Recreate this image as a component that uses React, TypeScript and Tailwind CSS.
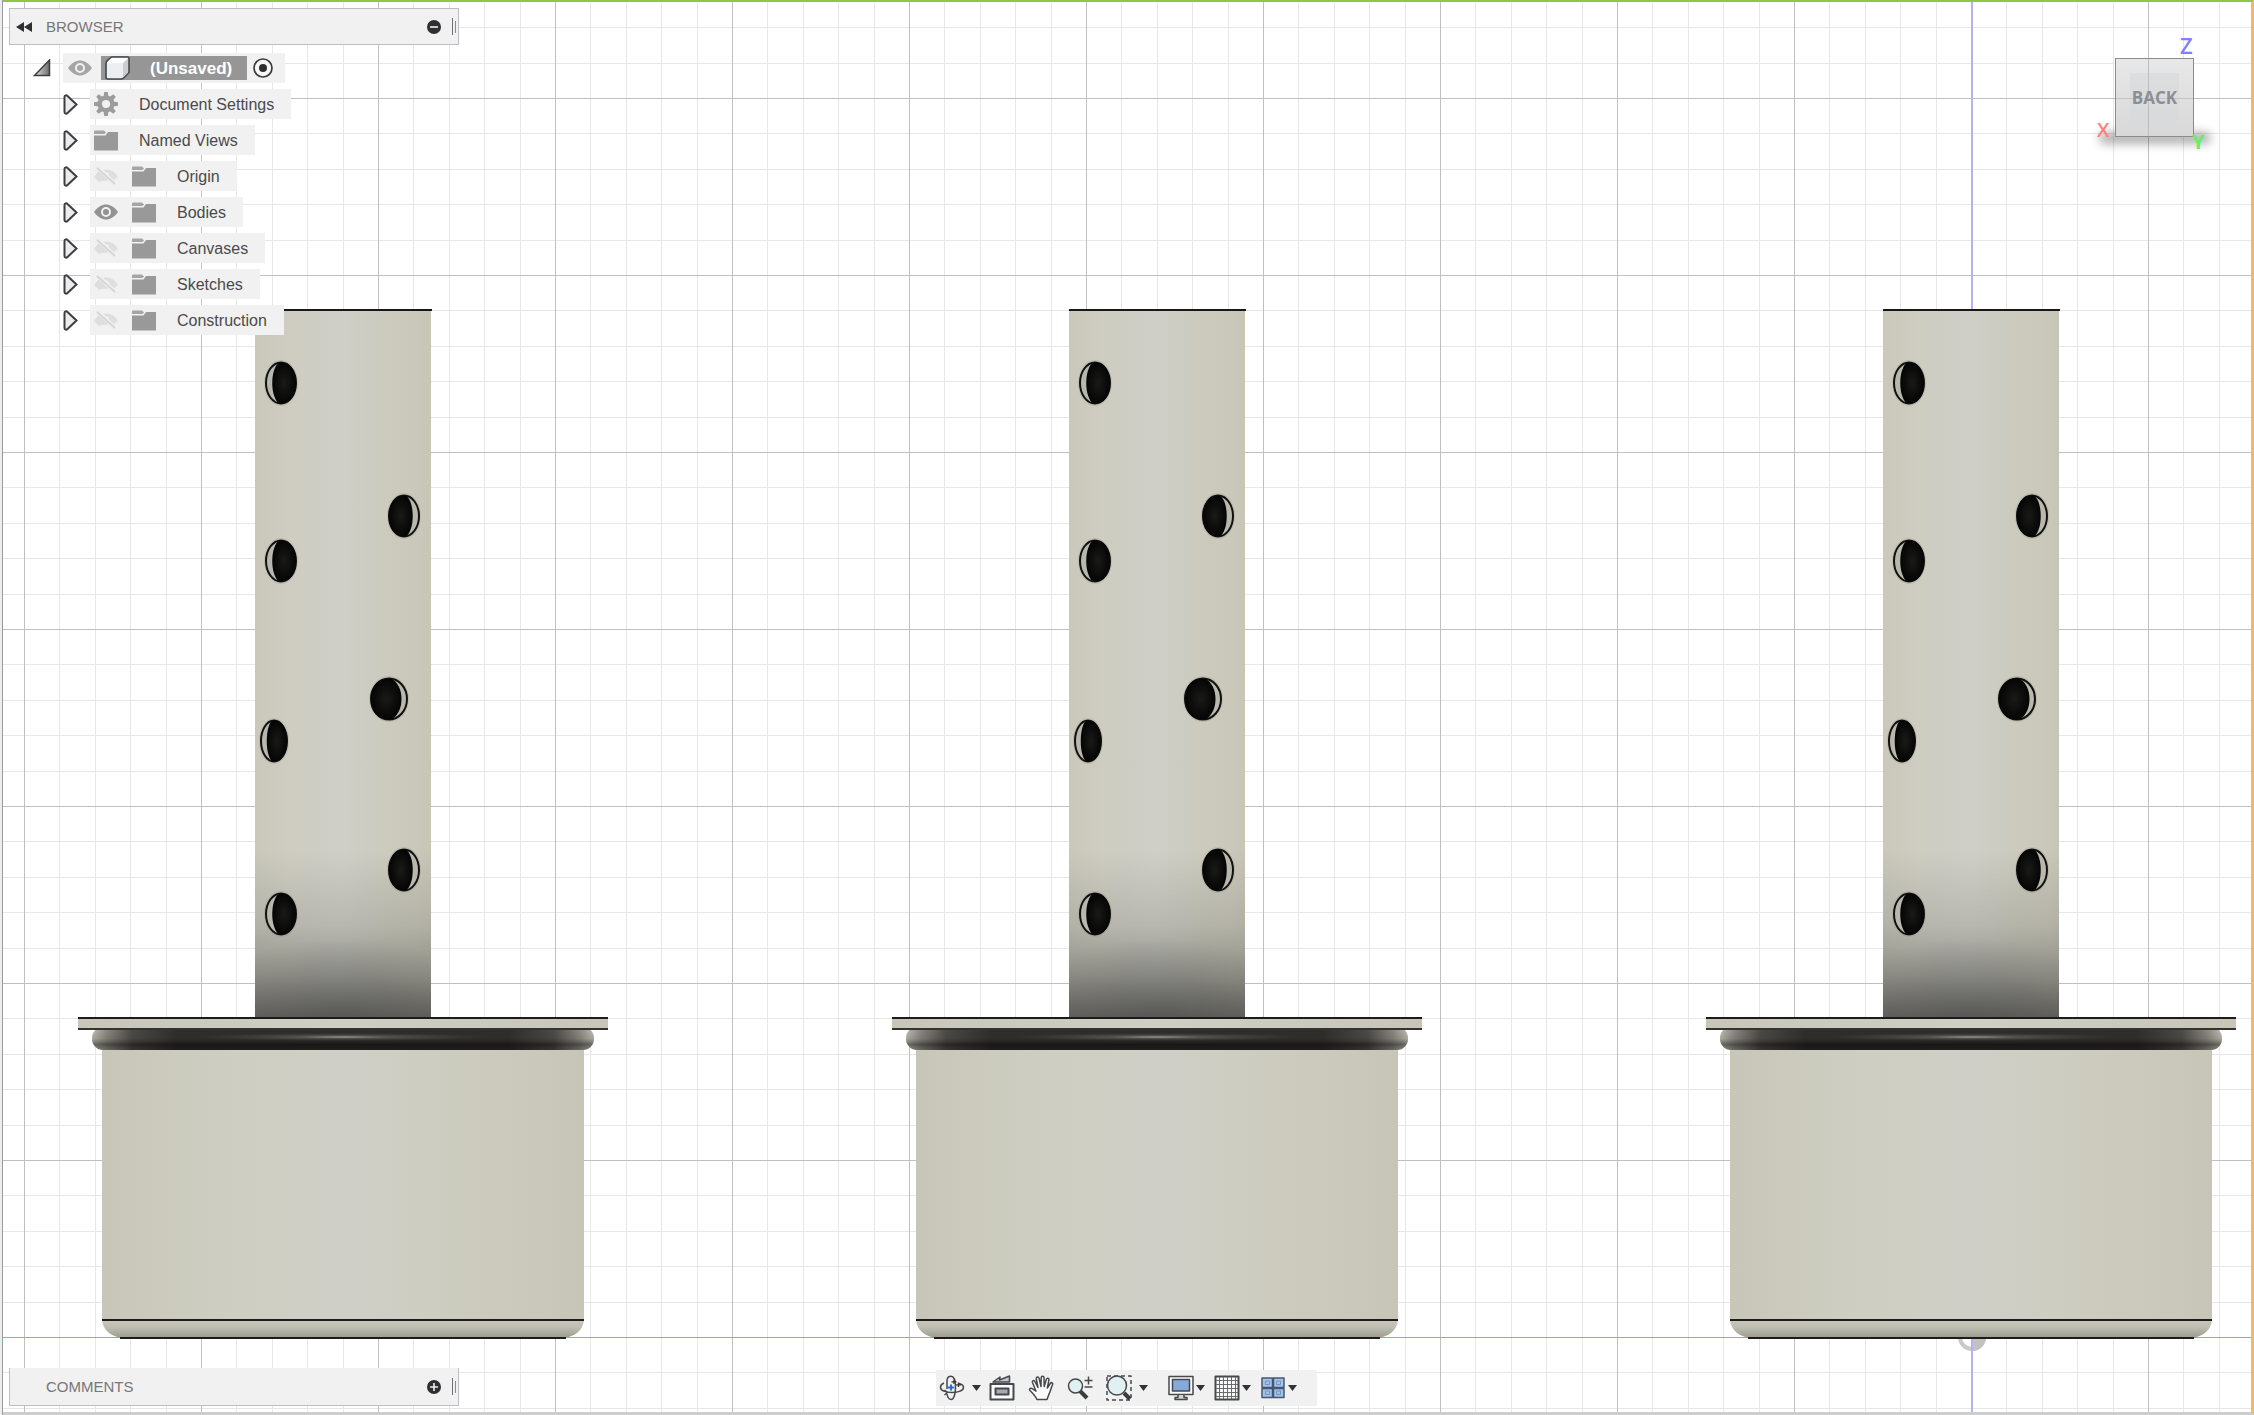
import React from "react";

const CENTERS = [343, 1157, 1971];

type HoleSpec = { x: number; y: number; rx: number; side: "left" | "right"; rim: number };

// Offsets are measured from the axis of the tube.
const HOLES: HoleSpec[] = [
  { x: -62, y: 383, rx: 15, side: "left", rim: 7 },
  { x: 61, y: 516, rx: 15, side: "right", rim: 7 },
  { x: -62, y: 561, rx: 15, side: "left", rim: 7 },
  { x: 46, y: 699, rx: 18, side: "right", rim: 5 },
  { x: -69, y: 741, rx: 13, side: "left", rim: 7 },
  { x: 61, y: 870, rx: 15, side: "right", rim: 7 },
  { x: -62, y: 914, rx: 15, side: "left", rim: 7 },
];

function Hole({ x, y, rx, side, rim }: HoleSpec) {
  const s = side === "left" ? 1 : -1;
  const inner = rx - rim;
  return (
    <g transform={`translate(${x} ${y}) scale(${s} 1)`}>
      <ellipse rx={rx + 2} ry={23} fill="#8d8b80" opacity="0.25" />
      <ellipse rx={rx} ry={20.5} fill="#b9b8af" stroke="#12110f" strokeWidth="2" />
      <path
        d={`M-2 -20.500 C${-inner - 3} -14 ${-inner - 3} 14 -2 20.500 C${rx * 0.7} 21.500 ${rx} 11 ${rx} 0 C${rx} -11 ${rx * 0.7} -21.500 -2 -20.500Z`}
        fill="url(#hole)"
      />
    </g>
  );
}

function Part({ cx }: { cx: number }) {
  return (
    <g transform={`translate(${cx} 0)`}>
      <rect x="-88" y="310" width="176" height="708" fill="url(#tube)" />
      <rect x="-88" y="850" width="176" height="168" fill="url(#contact)" />
      <rect x="-88" y="930" width="176" height="88" fill="url(#contactCore)" />
      <rect x="-88" y="309" width="177" height="2" fill="#191817" />
      {HOLES.map((h, i) => (
        <Hole key={i} {...h} />
      ))}
      <rect x="-241" y="1044" width="482" height="276" fill="url(#cup)" />
      <rect x="-251" y="1027" width="502" height="23" rx="11" fill="url(#seal)" />
      <rect x="-251" y="1027" width="502" height="23" rx="11" fill="url(#sealShade)" />
      <ellipse cx="0" cy="1037" rx="150" ry="4" fill="url(#glint)" />
      <rect x="-265" y="1018" width="530" height="12" fill="url(#flange)" />
      <rect x="-265" y="1017" width="530" height="2" fill="#1d1c1a" />
      <rect x="-265" y="1028" width="530" height="2" fill="#34332f" />
      <path d="M-241 1320H241C240 1331 231 1337 220 1338H-220C-231 1337 -240 1331 -241 1320Z" fill="url(#fillet)" />
      <rect x="-241" y="1319" width="482" height="2" fill="#1d1c1a" />
      <rect x="-223" y="1337" width="446" height="2" fill="#1d1c1a" />
    </g>
  );
}

const MAJOR_X = Array.from({ length: 13 }, (_, i) => 24 + i * 177);
const MAJOR_Y = Array.from({ length: 7 }, (_, i) => 98 + i * 177);
const MINOR_X = Array.from({ length: 64 }, (_, i) => Math.round(24 + i * 35.4)).filter((v) => v < 2254);
const MINOR_Y = Array.from({ length: 41 }, (_, i) => Math.round(98 + (i - 2) * 35.4)).filter((v) => v < 1412);

function Scene() {
  return (
    <svg
      className="absolute inset-0 h-full w-full"
      viewBox="0 0 2254 1415"
      preserveAspectRatio="xMidYMid slice"
      role="img"
      aria-label="Model viewport"
    >
      <defs>
        <linearGradient id="tube">
          <stop offset="0" stopColor="#c9c8bb" />
          <stop offset="0.2" stopColor="#cfcdc1" />
          <stop offset="0.3" stopColor="#cecdc4" />
          <stop offset="0.5" stopColor="#cfcfc7" />
          <stop offset="0.65" stopColor="#cdccc2" />
          <stop offset="0.72" stopColor="#cccbbe" />
          <stop offset="0.92" stopColor="#cac8ba" />
          <stop offset="1" stopColor="#c7c5b6" />
        </linearGradient>
        <linearGradient id="cup">
          <stop offset="0" stopColor="#c8c6b8" />
          <stop offset="0.12" stopColor="#cbcabd" />
          <stop offset="0.28" stopColor="#cecec2" />
          <stop offset="0.5" stopColor="#cfcfc7" />
          <stop offset="0.62" stopColor="#cecec4" />
          <stop offset="0.75" stopColor="#cccbbe" />
          <stop offset="0.92" stopColor="#c9c8ba" />
          <stop offset="1" stopColor="#c7c5b6" />
        </linearGradient>
        <linearGradient id="flange">
          <stop offset="0" stopColor="#c8c6b9" />
          <stop offset="0.5" stopColor="#cfcfc6" />
          <stop offset="1" stopColor="#c8c6b8" />
        </linearGradient>
        <linearGradient id="contact" x1="0" y1="0" x2="0" y2="1">
          <stop offset="0" stopColor="#5a5a58" stopOpacity="0" />
          <stop offset="0.45" stopColor="#5a5a58" stopOpacity="0.2" />
          <stop offset="0.75" stopColor="#5a5a58" stopOpacity="0.5" />
          <stop offset="1" stopColor="#50504e" stopOpacity="0.85" />
        </linearGradient>
        <radialGradient id="contactCore" cx="0.5" cy="1" r="0.9">
          <stop offset="0" stopColor="#3e3e3d" stopOpacity="0.35" />
          <stop offset="0.5" stopColor="#3e3e3d" stopOpacity="0.18" />
          <stop offset="1" stopColor="#3e3e3d" stopOpacity="0" />
        </radialGradient>
        <linearGradient id="seal">
          <stop offset="0" stopColor="#cfcdc2" />
          <stop offset="0.03" stopColor="#918f85" />
          <stop offset="0.08" stopColor="#4b4945" />
          <stop offset="0.17" stopColor="#2a2825" />
          <stop offset="0.83" stopColor="#2a2825" />
          <stop offset="0.92" stopColor="#4b4945" />
          <stop offset="0.97" stopColor="#918f85" />
          <stop offset="1" stopColor="#cfcdc2" />
        </linearGradient>
        <linearGradient id="sealShade" x1="0" y1="0" x2="0" y2="1">
          <stop offset="0" stopColor="#55524e" stopOpacity="0.1" />
          <stop offset="0.5" stopColor="#3b3835" stopOpacity="0.25" />
          <stop offset="0.75" stopColor="#080706" stopOpacity="0.5" />
          <stop offset="1" stopColor="#080706" stopOpacity="0.3" />
        </linearGradient>
        <radialGradient id="glint">
          <stop offset="0" stopColor="#b5b3b0" stopOpacity="0.9" />
          <stop offset="0.3" stopColor="#7b7876" stopOpacity="0.5" />
          <stop offset="1" stopColor="#55524f" stopOpacity="0" />
        </radialGradient>
        <linearGradient id="fillet" x1="0" y1="0" x2="0" y2="1">
          <stop offset="0" stopColor="#c9c8bc" />
          <stop offset="0.4" stopColor="#bfbeb1" />
          <stop offset="1" stopColor="#9b9a8f" />
        </linearGradient>
        <radialGradient id="hole">
          <stop offset="0" stopColor="#1a1a19" />
          <stop offset="0.6" stopColor="#0d0d0c" />
          <stop offset="1" stopColor="#050505" />
        </radialGradient>
      </defs>
      <rect width="2254" height="1415" fill="#ffffff" />
      {MINOR_X.map((x) => (
        <rect key={x} x={x} y="0" width="1" height="1415" fill="#e7e7e7" />
      ))}
      {MINOR_Y.map((y) => (
        <rect key={y} x="0" y={y} width="2254" height="1" fill="#e7e7e7" />
      ))}
      {MAJOR_X.map((x) => (
        <rect key={x} x={x} y="0" width="1" height="1415" fill="#c0c0c0" />
      ))}
      {MAJOR_Y.map((y) => (
        <rect key={y} x="0" y={y} width="2254" height="1" fill="#c0c0c0" />
      ))}
      <circle cx="1972" cy="1337" r="12" fill="#ffffff" stroke="#c9c9c9" strokeWidth="4" />
      <path d="M1972 1323a14 14 0 0 1 0 28Z" fill="#c2c2c2" />
      <rect x="0" y="1337" width="2254" height="1" fill="#f08484" />
      <rect x="1971" y="0" width="2" height="1415" fill="#b1b3f2" />
      {CENTERS.map((c) => (
        <Part key={c} cx={c} />
      ))}
    </svg>
  );
}

function Expander() {
  return (
    <svg width="15" height="21" viewBox="0 0 15 21" aria-hidden="true">
      <path d="M1.5 3V18C1.5 20 3.5 20 4.5 19L13.5 10.5L4.5 2C3.5 1 1.5 1 1.5 3Z" fill="#ececec" stroke="#3e3e42" strokeWidth="2" />
    </svg>
  );
}

function Eye({ light }: { light?: boolean }) {
  return (
    <svg width="24" height="16" viewBox="0 0 24 16" aria-hidden="true" className={light ? "text-[#a5a5a5]" : "text-[#929292]"}>
      <path d="M0 8C4 2.500 8 0.500 12 0.500S20 2.500 24 8C20 13.500 16 15.500 12 15.500S4 13.500 0 8Z" fill="currentColor" />
      <circle cx="12" cy="8" r="4" fill="none" stroke="#f1f1f1" strokeWidth="2" />
    </svg>
  );
}

function EyeOff() {
  return (
    <svg width="24" height="18" viewBox="0 0 24 18" aria-hidden="true">
      <path d="M0 10C2 7 4 5 6 3.500L15 13C13 14 11 14 9 13.500L5 15ZM9 3C15 1.500 20 4 24 9.500L20 13.500L15.500 9C15.500 6.500 13.500 5 11.500 5.500Z" fill="#dedede" />
      <path d="M3 0L22 18" stroke="#f1f1f1" strokeWidth="4" />
      <path d="M3 1L21 17" stroke="#d6d6d6" strokeWidth="2" />
    </svg>
  );
}

function Folder() {
  return (
    <svg width="24" height="21" viewBox="0 0 24 21" aria-hidden="true">
      <path d="M0 1.500Q0 0.500 1 0.500H10L12 2.500L10.500 4H0Z" fill="#a5a5a5" />
      <path d="M0 5.500H11.500L14 2H24V20.500H0Z" fill="#999999" />
    </svg>
  );
}

function Gear() {
  const teeth = [0, 45, 90, 135, 180, 225, 270, 315];
  return (
    <svg width="24" height="24" viewBox="0 0 24 24" aria-hidden="true">
      {teeth.map((a) => (
        <path key={a} d="M9.600 4.500L10.200 0H13.800L14.400 4.500Z" fill="#9c9c9c" transform={`rotate(${a} 12 12)`} />
      ))}
      <circle cx="12" cy="12" r="6.300" fill="none" stroke="#9c9c9c" strokeWidth="4.400" />
    </svg>
  );
}

type Node = { label: string; kind: "gear" | "folder"; eye?: "on" | "off" };

const NODES: Node[] = [
  { label: "Document Settings", kind: "gear" },
  { label: "Named Views", kind: "folder" },
  { label: "Origin", kind: "folder", eye: "off" },
  { label: "Bodies", kind: "folder", eye: "on" },
  { label: "Canvases", kind: "folder", eye: "off" },
  { label: "Sketches", kind: "folder", eye: "off" },
  { label: "Construction", kind: "folder", eye: "off" },
];

function TreeRow({ node }: { node: Node }) {
  return (
    <li className="flex items-center gap-3">
      <button type="button" aria-label={`Expand ${node.label}`} className="flex">
        <Expander />
      </button>
      <div className="flex h-[30px] items-center bg-[#f1f1f1] pr-[17px] pl-1">
        {node.eye && (
          <button type="button" aria-label={`Toggle ${node.label}`} className="mr-3.5 flex w-6">
            {node.eye === "on" ? <Eye /> : <EyeOff />}
          </button>
        )}
        <span className="flex w-6">{node.kind === "gear" ? <Gear /> : <Folder />}</span>
        <span className="ml-[21px] pt-0.5 text-[16px] leading-[20px] text-[#4a4a4c]">{node.label}</span>
      </div>
    </li>
  );
}

function Grip() {
  return (
    <span className="ml-[11px] flex h-[17px] items-center gap-0.5" aria-hidden="true">
      <span className="h-[17px] w-px bg-[#707070]" />
      <span className="h-[12px] w-px bg-[#8a8a8a]" />
    </span>
  );
}

function RoundSign({ plus }: { plus?: boolean }) {
  return (
    <svg width="14" height="14" viewBox="0 0 14 14" aria-hidden="true">
      <circle cx="7" cy="7" r="7" fill="#2f2f31" />
      <path d={plus ? "M3 7H11M7 3V11" : "M3 7H11"} stroke="#f1f1f1" strokeWidth="1.600" />
    </svg>
  );
}

function BrowserPanel() {
  return (
    <section aria-label="Browser" className="w-[450px]">
      <header className="flex h-[37px] items-center border border-[#bdbdc3] bg-[#f1f1f1] pr-0.5 pl-1.5">
        <button type="button" aria-label="Collapse browser" className="flex w-[17px]">
          <svg width="16" height="10" viewBox="0 0 16 10" aria-hidden="true">
            <path d="M8 0V10L0 5ZM16 0V10L8 5Z" fill="#2f2f31" />
          </svg>
        </button>
        <h2 className="ml-[13px] flex-1 text-[15px] leading-[20px] text-[#77777a]">BROWSER</h2>
        <button type="button" aria-label="Minimize browser" className="flex">
          <RoundSign />
        </button>
        <Grip />
      </header>
      <div className="mt-2 ml-6 flex items-center">
        <button type="button" aria-label="Collapse root" className="mr-3 flex">
          <svg width="18" height="18" viewBox="0 0 18 18" aria-hidden="true">
            <defs>
              <linearGradient id="open">
                <stop offset="0" stopColor="#e4e4e4" />
                <stop offset="1" stopColor="#6d6d6d" />
              </linearGradient>
            </defs>
            <path d="M1.500 16.500L16.500 1V16.500Z" fill="url(#open)" stroke="#3e3e42" strokeWidth="1.500" />
          </svg>
        </button>
        <div className="relative flex h-[30px] items-center bg-[#f1f1f1] pr-3 pl-[5px]">
          <button type="button" aria-label="Toggle root" className="mr-[9px] flex">
            <Eye light />
          </button>
          <div className="flex h-6 items-center bg-[#969696] pr-[15px] pl-1">
            <svg width="25" height="24" viewBox="0 0 25 24" aria-hidden="true">
              <path d="M1 7.500Q1 5.500 3 4L6.500 1H22.500Q24 1 24 2.500V16.500L18.500 22Q17.500 23 16 23H3Q1 23 1 21Z" fill="#eceef1" stroke="#45474c" strokeWidth="1.600" />
              <path d="M2 7L7 2H23L17.500 7Z" fill="#fdfdfe" />
              <path d="M18 7.500L23 2.500V16.500L18 21.500Z" fill="#c9ccd2" />
            </svg>
            <span className="ml-5 pt-0.5 text-[17px] leading-[20px] font-bold text-white">(Unsaved)</span>
          </div>
          <input type="radio" name="active-component" aria-label="Activate (Unsaved)" defaultChecked className="sr-only" />
          <svg width="20" height="20" viewBox="0 0 20 20" className="ml-1.5" aria-hidden="true">
            <circle cx="10" cy="10" r="9" fill="#f8f8f8" stroke="#3a3a3c" strokeWidth="1.700" />
            <circle cx="10" cy="10" r="4" fill="#2f2f31" />
          </svg>
        </div>
      </div>
      <ul className="mt-1.5 ml-[54px] flex flex-col gap-1.5 [font-kerning:none]">
        {NODES.map((n) => (
          <TreeRow key={n.label} node={n} />
        ))}
      </ul>
    </section>
  );
}

function ViewCube() {
  return (
    <div className="relative mt-[50px] mr-[60px] h-[79px] w-[79px] font-['Open_Sans',sans-serif]">
      <span className="absolute top-[74px] -left-4 h-3 w-28 rounded-full bg-black/30 blur-[5px]" />
      <span className="absolute top-[62px] -left-[18px] text-[20px] leading-[20px] font-semibold text-[#ff8080]">X</span>
      <span className="absolute -top-6 left-[65px] text-[22px] leading-[22px] font-semibold text-[#8080ff]">Z</span>
      <button
        type="button"
        className="relative flex h-[79px] w-[79px] items-center justify-center border border-[#8b8b8b] bg-linear-to-b from-[#e8e8e8] to-[#d8d8d8]"
      >
        <span className="absolute inset-[14px] bg-[#d6d9dc]/60" />
        <span className="absolute top-0 left-[32px] h-full w-px bg-[#bdbdbd]" />
        <span className="absolute top-[39px] left-0 h-px w-full bg-[#c4c4c4]" />
        <span className="relative text-[17px] leading-[24px] font-bold text-[#8b8f94]">BACK</span>
      </button>
      <span className="absolute top-[74px] left-[77px] text-[20px] leading-[20px] font-bold text-[#66ee66]">Y</span>
    </div>
  );
}

function Caret() {
  return (
    <svg width="9" height="6" viewBox="0 0 9 6" aria-hidden="true">
      <path d="M0 0H9L4.500 6Z" fill="#333335" />
    </svg>
  );
}

function Tool({ label, wide, children }: { label: string; wide?: boolean; children: React.ReactNode }) {
  return (
    <button type="button" aria-label={label} className={wide ? "flex items-center gap-[7px]" : "flex items-center gap-0.5"}>
      {children}
    </button>
  );
}

function Glyph({ children }: { children: React.ReactNode }) {
  return (
    <svg width="26" height="26" viewBox="0 0 26 26" fill="none" stroke="#47484c" strokeWidth="1.500" strokeLinejoin="round" aria-hidden="true">
      {children}
    </svg>
  );
}

function NavBar() {
  return (
    <nav aria-label="Navigation" className="flex h-9 items-center bg-[#f1f1f1] pr-5 pl-[3px]">
      <Tool label="Orbit" wide>
        <Glyph>
          <path d="M8 5C8.500 2 10 1.200 12 1.200C15 1.200 16.500 5 16.500 12.500C16.500 20 14.500 24.500 12.300 24.500C10 24.500 8.500 22 8 19" />
          <path d="M5 8C2.500 9 1.500 10.500 1.500 12.500C1.500 15.500 6.500 17.500 13 17.500S24.500 15.500 24.500 12.500C24.500 10.500 22.500 9 20 8.500M8 5V14" />
          <path d="M5.500 15L8.500 17.500L5.500 20" />
          <path d="M12 9.500V15.500M9 12.500H15" stroke="#2870c8" strokeWidth="2" />
          <path d="M15 4.500V9M12.500 6.800H17.500M19.500 7.500V12M17 9.800H22" stroke="#333335" strokeWidth="1.300" />
        </Glyph>
        <Caret />
      </Tool>
      <div className="ml-2 flex items-center gap-[13px]">
        <Tool label="Look at">
          <Glyph>
            <path d="M1.500 9H24.500V24.500H1.500Z" fill="#fafafa" strokeWidth="2" />
            <path d="M6.500 13.500H19.500V19.500H6.500Z" fill="#a7a9b4" strokeWidth="2" />
            <path d="M4 7L11 2L10.500 5L20.500 1V7Z" fill="#c4c6cb" />
          </Glyph>
        </Tool>
        <Tool label="Pan">
          <Glyph>
            <path d="M9 24.500C7.500 21 5 18.500 2 15.500C0.800 14.200 2.500 12.500 4.200 13.700L8 16.200L4.500 7.500C3.800 5.500 6.200 4.700 7 6.600L10 12.500L8.300 4C7.900 1.800 10.500 1.300 11.100 3.400L13 11.500L13.200 2.800C13.300 0.700 15.900 0.700 16 2.800L16.200 11.500L18.300 4.500C19 2.400 21.300 3.100 20.900 5.200L19.300 13L22.300 8.500C23.500 6.800 25.300 8 24.500 9.800C23.300 12.500 22.500 16 21 19L19 24.500Z" fill="#fcfcfc" />
          </Glyph>
        </Tool>
        <Tool label="Zoom">
          <Glyph>
            <path d="M13 16L20 23" stroke="#3b3c40" strokeWidth="4" />
            <circle cx="8.500" cy="11" r="7" fill="#e1f0f2" />
            <path d="M17.500 5.500H25.500M21.500 1.500V9.500M17.500 12H25.500" />
          </Glyph>
        </Tool>
        <Tool label="Fit" wide>
          <Glyph>
            <path d="M1 1H25V25H1Z" strokeDasharray="4 3" />
            <path d="M18 18L24 24" stroke="#3b3c40" strokeWidth="4" />
            <circle cx="11" cy="10.500" r="9.500" fill="#e1f0f2" />
          </Glyph>
          <Caret />
        </Tool>
      </div>
      <div className="ml-5 flex items-center gap-[9px]">
        <Tool label="Display settings">
          <Glyph>
            <path d="M1 1.500H25V19.500H1Z" fill="#fafafa" />
            <path d="M4.500 4.500H21.500V16H4.500Z" fill="#86a9dc" />
            <path d="M10 20V22.500H7V24.500H19V22.500H16V20" fill="#d0d2d6" />
          </Glyph>
          <Caret />
        </Tool>
        <Tool label="Grid and snaps">
          <Glyph>
            <path d="M1.500 1.500H24.500V24.500H1.500Z" fill="#fafafa" strokeWidth="2" />
            <path d="M5.500 2V24M9.500 2V24M13.500 2V24M17.500 2V24M21.500 2V24M2 5.500H24M2 9.500H24M2 13.500H24M2 17.500H24M2 21.500H24" stroke="#6a6b6f" strokeWidth="1" />
          </Glyph>
          <Caret />
        </Tool>
        <Tool label="Viewports">
          <Glyph>
            <path d="M2 3H12.500V12.500H2ZM13.500 3H24V12.500H13.500ZM2 13.500H12.500V22.500H2ZM13.500 13.500H24V22.500H13.500Z" fill="#a5c2e8" stroke="#46566f" />
            <path d="M5.500 6H9.500V9.500H5.500ZM16.500 6H20.500V9.500H16.500ZM5.500 16H9.500V19.500H5.500ZM16.500 16H20.500V19.500H16.500Z" stroke="#6f93c7" strokeWidth="1" />
          </Glyph>
          <Caret />
        </Tool>
      </div>
    </nav>
  );
}

export default function App() {
  return (
    <main className="relative flex min-h-screen flex-col overflow-hidden bg-white font-['Liberation_Sans',Arial,sans-serif]">
      <Scene />
      <div className="pointer-events-none absolute inset-0 border-t-2 border-r-[3px] border-b-[3px] border-t-[#92c446] border-r-[#efb965] border-b-[#cdcdcd]" />
      <div className="pointer-events-none absolute inset-y-0 left-0 w-[3px] border-r border-[#9b9b9f] bg-[#ececec]" />
      <div className="relative flex flex-1 items-start justify-between pt-2 pl-[9px]">
        <BrowserPanel />
        <ViewCube />
      </div>
      <div className="relative grid grid-cols-[1fr_auto_1fr] items-end pr-[11px] pb-[9px] pl-[9px]">
        <section
          aria-label="Comments"
          className="flex h-[38px] w-[450px] items-center border-x border-b border-[#bdbdc3] bg-[#f1f1f1] pr-0.5 pl-9"
        >
          <h2 className="flex-1 text-[15px] leading-[20px] text-[#77777a]">COMMENTS</h2>
          <button type="button" aria-label="Add comment" className="flex">
            <RoundSign plus />
          </button>
          <Grip />
        </section>
        <NavBar />
      </div>
    </main>
  );
}
